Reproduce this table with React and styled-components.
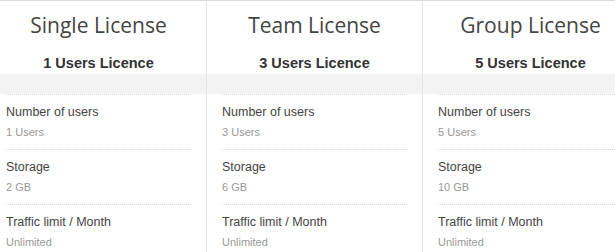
import React from "react";
import styled, { createGlobalStyle } from "styled-components";

const GlobalStyle = createGlobalStyle`
  html, body {
    margin: 0;
    padding: 0;
    background: #fff;
    overflow: hidden;
  }
`;

const Table = styled.div`
  display: flex;
  margin-left: -9px;
  border-top: 1px solid #dcdcdc;
`;

const Column = styled.div`
  flex: 0 0 216px;
  box-sizing: border-box;
  border-right: 1px solid #e3e3e3;
`;

const Head = styled.div`
  padding-top: 9px;
  text-align: center;
`;

const Title = styled.h2`
  margin: 0;
  font-family: "Open Sans", sans-serif;
  font-weight: 400;
  font-size: 21px;
  line-height: 30px;
  color: #444;
`;

const Subtitle = styled.div`
  margin-top: 14px;
  font-family: "Liberation Sans", Arial, sans-serif;
  font-weight: 700;
  font-size: 14.5px;
  line-height: 18px;
  color: #333;
`;

const Band = styled.div`
  height: 20px;
  margin-top: 2px;
  background: #f3f3f3;
`;

const Features = styled.ul`
  list-style: none;
  margin: 0;
  padding: 0 15px;
`;

const Feature = styled.li`
  border-top: 1px dotted #d6d6d6;
  padding: 8px 0 9px;
  font-family: "Liberation Sans", Arial, sans-serif;
`;

const Label = styled.div`
  font-size: 12.5px;
  line-height: 18px;
  color: #444;
`;

const Value = styled.div`
  margin-top: 3px;
  font-size: 11px;
  line-height: 16px;
  color: #999;
`;

const plans = [
  { title: "Single License", users: 1, storage: "2 GB" },
  { title: "Team License", users: 3, storage: "6 GB" },
  { title: "Group License", users: 5, storage: "10 GB" },
];

export default function App() {
  return (
    <>
      <GlobalStyle />
      <Table>
        {plans.map((p) => (
          <Column key={p.title}>
            <Head>
              <Title>{p.title}</Title>
              <Subtitle>{p.users} Users Licence</Subtitle>
            </Head>
            <Band />
            <Features>
              <Feature>
                <Label>Number of users</Label>
                <Value>{p.users} Users</Value>
              </Feature>
              <Feature>
                <Label>Storage</Label>
                <Value>{p.storage}</Value>
              </Feature>
              <Feature>
                <Label>Traffic limit / Month</Label>
                <Value>Unlimited</Value>
              </Feature>
            </Features>
          </Column>
        ))}
      </Table>
    </>
  );
}
